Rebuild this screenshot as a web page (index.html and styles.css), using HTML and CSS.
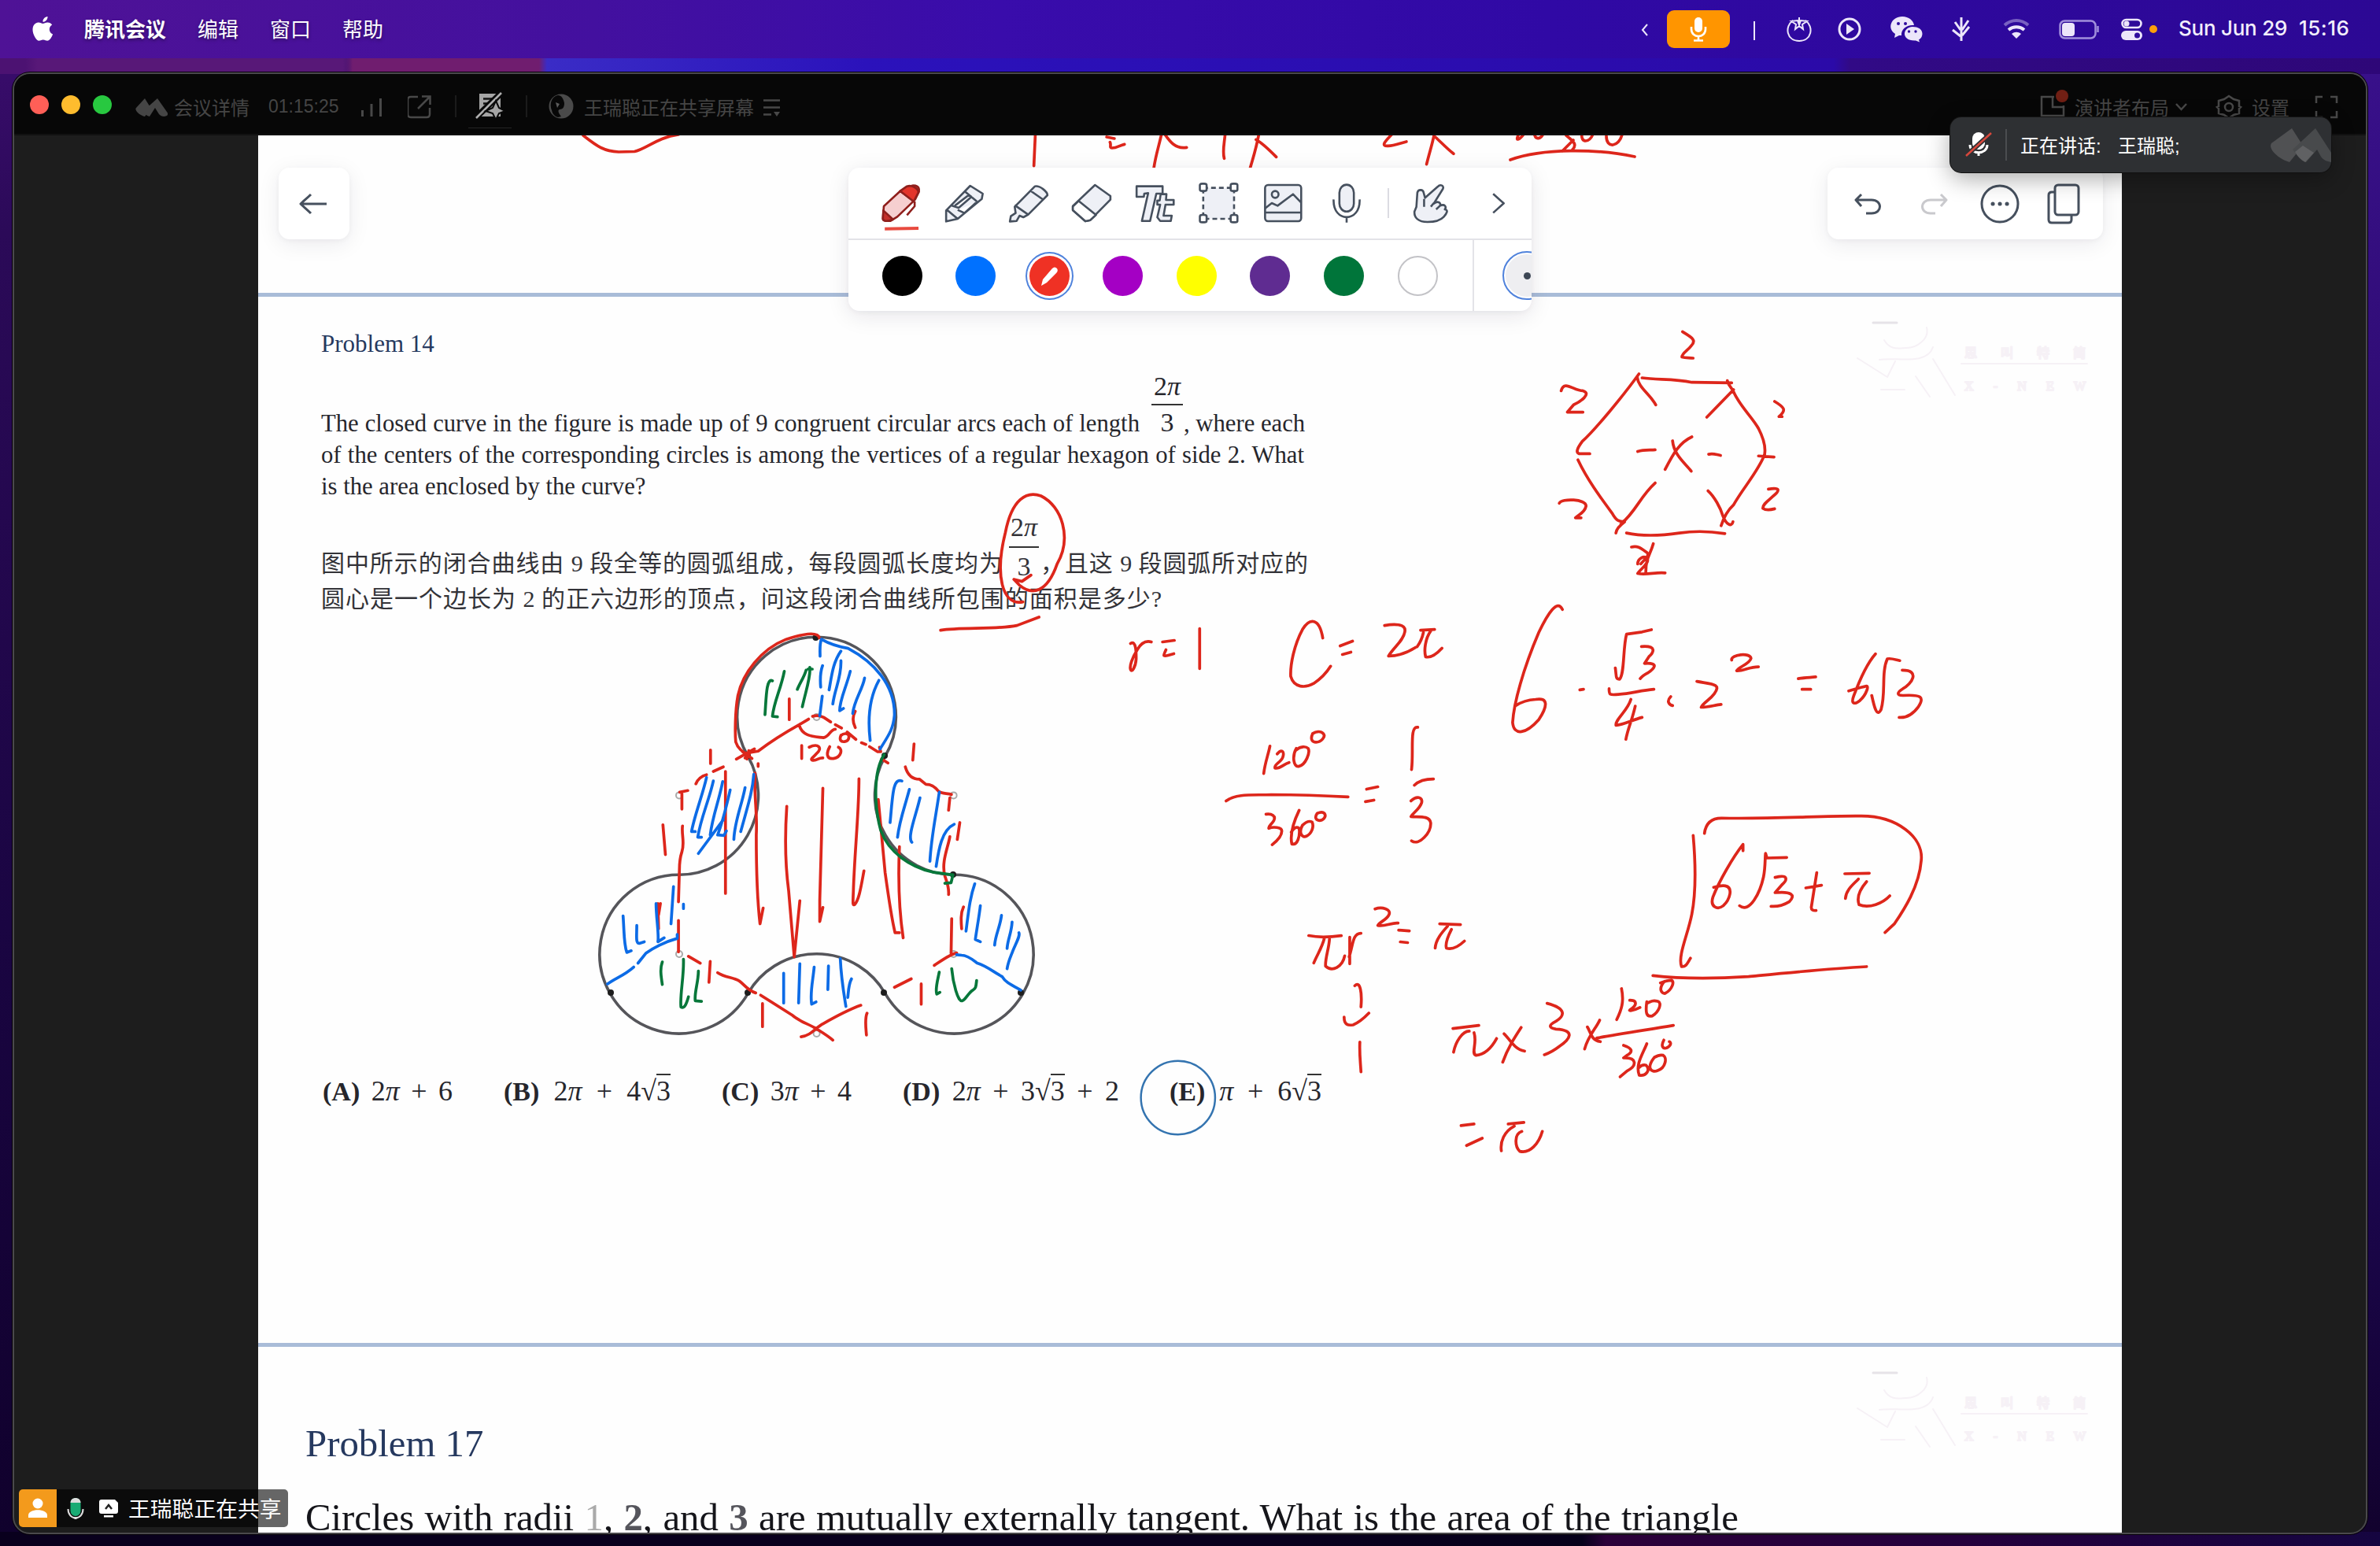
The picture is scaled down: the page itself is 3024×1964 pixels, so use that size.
FILE: index.html
```html
<!DOCTYPE html>
<html lang="zh-CN">
<head>
<meta charset="utf-8">
<title>腾讯会议</title>
<link rel="stylesheet" href="styles.css">
</head>
<body>
<header class="menubar">
  <nav class="menus">
    <svg class="apple" width="28" height="34" viewBox="40 18 28 34"><path d="M60.500 19c.3 3.500-2.500 6.800-6 6.800-.4-3.400 2.700-6.600 6-6.800zM54.500 28c1.500 0 3.300-1.500 6-1.500 2.200 0 4.400 1.200 5.700 3-5 3-4.200 10 .9 12-1.200 3.300-4 8.300-7 8.300-2 0-2.800-1.300-5.300-1.300s-3.400 1.300-5.300 1.300c-3.200 0-8-8-8-14 0-5.700 3.500-9.200 7.300-9.200 2.500 0 4.300 1.400 5.700 1.400z"/></svg>
    <b>腾讯会议</b><span>编辑</span><span>窗口</span><span>帮助</span>
  </nav>
  <div class="status">
    <svg width="44" height="74" viewBox="2074 0 44 74" class="line"><path d="M2093 31l-6 7 6 7"/></svg>
    <div class="mic-on"><svg width="26" height="34" viewBox="0 0 26 34"><rect x="8" y="2" width="10" height="19" rx="5" fill="#fff"/><path d="M4 14v3c0 12 18 12 18 0v-3M13 26v5M7 31.500h12" fill="none" stroke="#fff" stroke-width="2.600"/></svg></div>
    <svg width="60" height="74" viewBox="2198 0 60 74" class="line"><path d="M2229 27v24"/></svg>
    <svg width="62" height="74" viewBox="2258 0 62 74" class="line"><path d="M2278 26c-11 8-8 26 8 26s19-18 8-26M2286 30v-8M2276 27l8-1 2 6 2-6 8 1-6 4 1 6-5-4-5 4 1-6z"/></svg>
    <svg width="60" height="74" viewBox="2320 0 60 74" class="line thick"><circle cx="2350" cy="37" r="13"/><path class="solid" d="M2346 30l10 7-10 7z"/></svg>
    <svg width="80" height="74" viewBox="2380 0 80 74"><path class="lilac" d="M2417 21c8.500 0 14 5 15 11-9-1-17 5-16 13h-3l-6 3 1-5c-11-7-5-22 9-22z"/><path class="lilac" d="M2430 34c15 0 15 13 8 16.500l1 3-5-2c-19 1-17-17-4-17.500z"/><g fill="#2f0b9d"><circle cx="2412" cy="30" r="2"/><circle cx="2421" cy="30" r="2"/><circle cx="2425.500" cy="40" r="1.700"/><circle cx="2434" cy="40" r="1.700"/></g></svg>
    <svg width="62" height="74" viewBox="2460 0 62 74" class="line thick"><path d="M2492 22v30M2501 26l-8 12M2484 28l7 10M2502 34l-9 11M2481 38l10 8"/></svg>
    <svg width="78" height="74" viewBox="2522 0 78 74" class="line wifi"><path opacity=".4" d="M2547 32c9-8 21-8 30 0"/><path d="M2552 38c6-5 14-5 20 0"/><path class="solid" d="M2556 43c4-3 8-3 12 0l-6 6z" stroke="none"/></svg>
    <svg width="84" height="74" viewBox="2600 0 84 74"><rect x="2617.500" y="26.500" width="45" height="22" rx="6" fill="none" stroke="#a18fdc" stroke-width="2.500"/><path d="M2665.500 33v8" stroke="#a18fdc" stroke-width="2.500"/><rect class="lilac" x="2620" y="29" width="16" height="17" rx="4"/></svg>
    <svg width="80" height="74" viewBox="2684 0 80 74"><rect x="2696.500" y="25" width="24" height="10" rx="5" fill="none" stroke="#ece6fa" stroke-width="2.600"/><circle class="lilac" cx="2702" cy="30" r="3.500"/><rect class="lilac" x="2695" y="39" width="27" height="12" rx="6"/><circle cx="2715.500" cy="45" r="3.500" fill="#2f0b9d"/><circle cx="2736" cy="37" r="5" fill="#ff9f0a"/></svg>
    <span class="date">Sun Jun 29</span><span class="time">15:16</span>
  </div>
</header>

<main class="window">
  <div class="titlebar">
    <div class="lights"><i class="red"></i><i class="amber"></i><i class="green"></i></div>
    <div class="meeting">
      <svg width="42" height="40" viewBox="171 115 42 40"><path class="dim" d="M184 125l8 13-8 10c-6-1-14-8-11-11zM200 125l14 20c-4 5-9 3-12 0l-5-8-7 11c-4-1-7-4-8-7z"/></svg>
      <span class="t">会议详情</span><span class="clock">01:15:25</span>
      <svg width="78" height="40" viewBox="440 115 78 40"><path d="M460.500 140v8M472 132v16M483.500 125v23" stroke="#484848" stroke-width="3"/></svg>
      <svg width="60" height="40" viewBox="518 115 60 40" class="dimline"><path d="M531 123h-9q-4 0-4 4v18q0 4 4 4h20q4 0 4-4v-8M531 138l15-15M536 122.500h10.500V133"/></svg>
      <i class="sep"></i>
      <svg width="88" height="56" viewBox="579 108 88 56"><path d="M608 120h27v29h-27z" fill="#a5a5a5"/><path d="M613 126.500h12M613 132.500h8M613 138.500h5" stroke="#111" stroke-width="2.500"/><path d="M602 152l35-34" stroke="#080808" stroke-width="8"/><path d="M604 151l32-32" stroke="#b0b0b0" stroke-width="2.500"/><path d="M629 129l4 9 8 4-8 3-4 8-4-8-9-3 9-4z" fill="#a5a5a5" stroke="#080808" stroke-width="2"/><path d="M594 163.500h55" stroke="#242424"/></svg>
      <i class="sep"></i>
      <svg width="72" height="40" viewBox="669 115 72 40"><circle cx="712" cy="135" r="15.500" fill="#4a4a4a"/><path d="M708 121c-9 2-11 12-8 19 1 5 4 8 8 9l4-1c-3-4-5-8-2-9 5 0 6-4 6-8-1-6-4-10-8-10z" fill="#070707"/><path d="M705 130l5 2-3 5z" fill="#5c5c5c"/></svg>
      <span class="t">王瑞聪正在共享屏幕</span>
      <svg width="34" height="40" viewBox="958 115 34 40" class="dimline"><path d="M970 127.500h21M970 136.500h21M970 145.500h10"/><path d="M983 142h8l-4 6z" fill="#484848" stroke="none"/></svg>
    </div>
    <div class="tools">
      <svg width="56" height="56" viewBox="2580 108 56 56" class="dimline"><path d="M2610 124h-16v24h28v-13M2608 125v12h14"/><circle cx="2620" cy="123" r="8" fill="#701f14" stroke="none"/></svg>
      <span class="t">演讲者布局</span>
      <svg width="105" height="40" viewBox="2756 115 105 40" class="dimline"><path d="M2765 132l6.500 7 6.500-7"/><path d="M2832 122l6 4 7 2v7l2 1-2 2v6l-7 2-6 4-6-4-7-2v-6l-2-2 2-1v-7l7-2z"/><circle cx="2832" cy="136" r="5"/></svg>
      <span class="t">设置</span>
      <svg width="62" height="40" viewBox="2909 115 62 40" class="dimline"><path d="M2943 131v-8h8M2961 123h8v8M2969 141v8h-8M2951 149h-8v-8"/></svg>
    </div>
  </div>

  <div class="stage">
    <article class="board">
      <section class="page-above"></section>
      <section class="page14">
        <h2>Problem 14</h2>
        <div class="en">
          <div class="row"><p class="fit e1">The closed curve in the figure is made up of 9 congruent circular arcs each of length</p><span class="frac"><span>2<i>π</i></span><span>3</span></span><p class="fit e2">, where each</p></div>
          <p class="fit full">of the centers of the corresponding circles is among the vertices of a regular hexagon of side 2. What</p>
          <p class="e3">is the area enclosed by the curve?</p>
        </div>
        <div class="zh">
          <div class="row"><p class="fit z1">图中所示的闭合曲线由 9 段全等的圆弧组成，每段圆弧长度均为</p><span class="frac zf"><span>2<i>π</i></span><span>3</span></span><p class="fit z2">，且这 9 段圆弧所对应的</p></div>
          <p class="fit z3">圆心是一个边长为 2 的正六边形的顶点，问这段闭合曲线所包围的面积是多少?</p>
        </div>
        <svg class="figure" width="600" height="584" viewBox="740 783 600 584">
          <path class="curve" d="M950.400 961.800A100.800 100.800 0 1 1 1124.600 961.800A100.800 100.800 0 0 0 1211.600 1112.300A100.800 100.800 0 1 1 1124.600 1262.800A100.800 100.800 0 0 0 950.400 1262.800A100.800 100.800 0 1 1 863.200 1112.300A100.800 100.800 0 0 0 950.400 961.800Z"/>
          <g class="dots"><circle cx="1036.500" cy="811" r="4"/><circle cx="950" cy="961" r="4"/><circle cx="1124" cy="961" r="4"/><circle cx="1211" cy="1112" r="4"/><circle cx="776" cy="1262" r="4"/><circle cx="950" cy="1262" r="4"/><circle cx="1123" cy="1262" r="4"/><circle cx="1297" cy="1262" r="4"/></g>
          <g class="centres"><circle cx="1037.600" cy="912" r="4"/><circle cx="1211.600" cy="1011.400" r="4"/><circle cx="1211.600" cy="1213" r="4"/><circle cx="1037.600" cy="1314" r="4"/><circle cx="863" cy="1213" r="4"/><circle cx="863" cy="1011.400" r="4"/></g>
        </svg>
        <div class="choices">
          <p class="fit a"><b>(A)</b> 2<i>π</i> + 6</p>
          <p class="fit b"><b>(B)</b> 2<i>π</i> + 4<span class="rad">√<u>3</u></span></p>
          <p class="fit c"><b>(C)</b> 3<i>π</i> + 4</p>
          <p class="fit d"><b>(D)</b> 2<i>π</i> + 3<span class="rad">√<u>3</u></span> + 2</p>
          <p class="fit e"><b>(E)</b> <i>π</i> + 6<span class="rad">√<u>3</u></span></p>
        </div>
      </section>
      <section class="page17">
        <h2>Problem 17</h2>
        <p class="fit">Circles with radii <span class="grey">1</span>, <span class="bold">2</span>, and <span class="bold">3</span> are mutually externally tangent. What is the area of the triangle</p>
      </section>

      <svg class="ink" width="2368" height="1776" viewBox="328 172 2368 1776">
        <defs>
          <g id="watermark"><path d="M2394 432c8 14 20 10 28 10 14 0 30-12 26-26M2388 457c20-4 60 8 68-16M2360 455l38 24 10-20M2390 495h30M2434 478l18 26M2456 456l28 46M2492 462h160"/><path class="cap" d="M2380 410h30"/><text x="2496" y="454" textLength="154">思叫特简</text><text class="latin" x="2496" y="496" textLength="154">X-NEW</text></g>
        </defs>
        <g class="mark"><use href="#watermark"/><use href="#watermark" y="1334"/></g>
        <!-- previous page strokes -->
        <path d="M741 172C760 187 768 192 786 193L806 192.500C820 190 836 174 862 171"/>
        <g transform="translate(1040 150) scale(.6122 .3333)">
          <path d="M450 60L447 182M598 72l16 6M605 92c3 10-2 22 4 22 10 0 16-10 26-14M712 60c-6 50-12 80-16 130M718 60c10 26 22 60 46 52M844 60c-2 40-6 66-2 94M914 60c-6 60-12 90-18 130M908 82c14 14 28 40 42 66M1190 62c-10 20-26 46-8 44 14-1 24-10 38-16M1278 60c-4 40-10 70-16 116M1280 72c12 20 24 44 38 64"/>
        </g>
        <path d="M1919 203C1960 188 2030 189 2077 199M1929 172c-4 8 2 6 8-3M1950 172c2 6 9 4 11-3M1985 192l14-14M1990 172c10 8 14 12 8 18M2010 170c-2 12 10 12 14 0M2041 173c0 16 16 14 20-2"/>
        <!-- ring round the fraction -->
        <g transform="translate(380 400) scale(.6378 .3333)">
          <path d="M1442 1094C1400 1110 1386 990 1407 830C1420 700 1450 670 1478 690C1520 730 1540 850 1510 950C1490 1060 1460 1070 1435 1030L1424 1008L1440 1016L1458 992M1278 1202C1320 1190 1390 1200 1430 1184L1474 1152"/>
        </g>
        <!-- strokes over the figure -->
        <g transform="translate(730 780) scale(.3954 .3571)">
          <path d="M787 85C780 60 730 72 680 90C600 125 540 210 525 290C515 350 516 430 518 455C525 480 540 490 556 500M520 516l58-36M540 490l30 24M548 512l24-26M560 486l-6 30M556 494L590 488C640 446 680 420 722 394L752 374M722 394C730 440 780 436 800 440C820 436 820 412 838 410M765 364c16-6 26-2 36 4l22 16M838 394l20 12M876 420l28 26M922 458l14 6M948 472l26 18h10l-4-16M690 302v74M902 346c-10 20-8 40 0 58M730 468v46M754 474c30-16 44 4 24 22-10 14-22 20-14 24 14 4 20-10 34-8M820 472c-12 24-10 46 12 42 26-4 30-34 16-40M856 432c-6 16 0 24 12 22 16-2 18-26 6-28-10-2-14 2-18 6M987 516l20 14M590 532v10M437 484v48M446 560l32-16M390 604c6-16 14-26 34-32M338 634l26-6M345 640v54M347 754c-4 30 8 60-2 92-6 20-8 40-8 64l-3 114M334 1090v112M284 750l8 106M485 560v434M580 566c-4 80 8 140 4 220 0 120 4 240 12 316l10-56M682 684c-6 100-6 200 6 300 6 80 12 160 18 236l18-200M798 620c-2 120-6 240-10 400v74l10-50M914 586c0 120-14 260-18 400-2 50-2 50 4 48 14-16 20-60 30-120M976 660l22 260c10 80 20 160 32 214h14M1044 828c-4 100-2 220 12 324M1091 462l-4 58M1063 544c6 24 18 44 46 44l20 18c20 0 30 10 40 24 14 12 28 6 42 12M1206 654l-4 44M1238 742l-8 60M1206 792c-6 40-28 90-16 140 6 20 14 40 12 66M1212 1084l-2 122M1250 1042c-10 24-8 50-6 78M1228 1206c-20 4-50 28-72 44M1082 1298l-54 30M1114 1316v72M366 1218l38 24M436 1236l-4 74M460 1276c24 18 50 16 70 30 14 10 24 32 52 42M598 1356l100 70c24 24 50 30 80 50 20 14 38 26 52 40M920 1392c-50 20-90 46-128 70-20 14-34 38-64 42M604 1386v82M940 1420c-8 20-4 50-2 78M268 1030l2 90M276 1030l-6 40"/>
          <g class="blue"><path d="M793 90c-6 20-4 40-4 60M797 184c-8 24-8 50-6 76M796 292l-8 70M793 90c16 10 40 24 86 32C960 170 1030 250 1028 360c-4 50-18 70-46 120M856 132c-26 40-30 90-38 138M856 166c2 60-20 100-26 154M886 204c-14 60-34 100-34 140l12-8M932 228c-6 40-34 80-38 126M978 236c-30 60-36 140-28 214M424 582c-12 60-40 140-48 192h12M446 594c-14 70-40 130-50 200h12M476 596c-12 70-32 120-40 190M500 626c-12 60-20 100-40 160l20 2 8-16M548 618c-10 60-34 120-36 184M576 570c-4 60-16 100-42 204M398 852l80-120M1052 594c-30-14-30 60-38 148M1076 624c-14 60-32 110-38 170M1110 654c-12 60-42 140-26 158M1172 634c-10 80-26 160-30 246M1220 748c-40 20-50 90-58 150M318 970l-8 132M350 1032v16M156 1074c4 60 2 100 12 130l14-6M200 1108c0 40-4 64 8 64l16-6M262 1030c0 50 10 110 6 136l20-14M330 1140v14c-40 12-80 36-100 52l-26 36M190 1256c-30 30-60 40-84 60M1286 960c-16 50-20 100-28 168M1304 1038c-4 40-14 100-16 120l16 8M1372 1072c-4 40-20 70-22 106M1406 1096c-2 40-14 60-16 94M1428 1134c4 10-6 30-18 60-10 30-16 40-20 68M1228 1212l16 2c20 0 40 20 50 28 30 10 50 30 80 48 10 20 30 30 60 48M672 1278v106M724 1244l-4 140M770 1256c-4 50-14 90-8 132l14-8M816 1252l-2 84M854 1226c2 50 12 130 18 170M890 1298c-10 20-10 50-12 66"/></g>
          <g class="green"><path d="M636 238c-20-12-20 60-24 120M674 204c-10 60-34 110-38 160l16 2M744 200c-6 24-20 46-28 68M756 190c4 30-12 80-24 140M750 196h14M995 500C960 560 962 680 984 770C1010 850 1080 900 1150 918l64 10M1190 958l20-2 6-28M282 1238c-8 24-4 50 0 80M350 1228c2 60-12 130-8 170 12 10 20-20 24-36M398 1270c0 40-14 80-10 106l20 2M1172 1274c-4 24-14 60-8 78l10-6M1212 1262c4 50 20 120 34 114 10-2 20-30 34-38 10-6 10-14 12-34"/></g>
        </g>
        <!-- radius and arc fraction -->
        <g transform="translate(1380 720) scale(.3571 .4974)">
          <path d="M158 196c22-10 20 30 20 40-2 20-16 36-20 26-4-8 6-30 24-50 14-18 30-24 50-20M272 192l42-4M284 212c-10 16-12 18 8 14l20-4M404 158v102M842 182C830 130 796 130 770 160C740 200 726 250 728 280C740 310 780 310 810 298C840 284 856 270 870 254M904 202l44-12M912 224l30-6M1062 150c30-4 78-6 72 16-6 24-40 40-58 62 40 0 70-10 96-22M1190 162l50-2M1200 168c-4 14-10 24-22 36M1226 164c-20 20-24 50-18 66 20 4 40-8 58-22M654 458c-6 22-18 44-22 70M680 478c16-14 26-6 20 8-6 14-32 18-28 28 16 4 30-10 50-14M748 464c-16 20-10 48 8 46 26-4 42-36 34-46-8-6-28-6-42 4M806 426c-10 16 0 22 12 22 18 0 36-14 26-22-10-8-28-4-38 0M498 598c40-20 100-14 160-16 100 0 180 2 274 6M998 568l40-6M994 600l30-4M640 632c20-2 36 4 28 16-8 10-20 14-18 20 14-4 48-4 46 8 0 14-20 26-34 34M758 622c-16 24-34 60-26 86 20 4 30-20 26-40-12-6-22 2-28 10M770 660c-16 20 0 34 14 28 18-6 28-24 20-36-10-4-22 0-34 8M822 630c-10 10-4 18 8 18 14 0 26-10 18-18-8-6-20-2-26 0M1180 410c-30-4-14 60-22 108M1168 558c14-10 40-16 68-16M1156 598c20-14 42-10 38 4-6 16-30 26-38 36 24 2 66-4 70 16 2 24-40 60-68 46M792 942c40 6 76 4 116 0M848 948c-8 24-24 40-38 64M866 950c-2 26-16 50-14 70 24 16 60 2 68-26M938 946v68M978 936c-30 0-28 30-42 60M1028 874c24-6 58 0 50 14-8 14-32 18-40 28 24 4 50-8 72-6M1112 928l38 2M1118 958l26 2M1258 912l74 2M1286 918c-20 16-42 34-44 56M1300 926c-10 14-24 34-18 48 24 6 46-6 64-18M956 1070c20-14 26 20 22 54M918 1150c0 20 14 22 32 20 20-6 40-18 56-30M974 1214c-2 30 2 50 4 76"/>
          <ellipse class="ring" cx="327" cy="1356" rx="132" ry="94"/>
        </g>
        <!-- hexagon and its area -->
        <g transform="translate(1880 400) scale(.3954 .3571)">
          <path d="M652 60c30 20 46 30 28 50-10 16-30 26-30 40 12 4 24 2 36 4M512 210C460 290 370 410 330 450C310 480 310 490 320 494h34M506 220c4 40 40 60 60 100M522 224c50 8 100 2 160 16l128 2M796 234c4 20 14 24 20 40 20 50 60 90 80 130 14 30 24 60 20 90M816 266l-86 98M262 270c10-40 40 0 70 0 30 10-10 40-30 50l-20 26h50M948 308c30 20 40 30 14 54h10M508 486c20-8 40-4 56-6M682 434c-40 20-60 60-86 116M620 448c4 50 40 80 60 108M736 496c14-4 20 0 38 4M896 502l50 4M916 496c-20 60-70 120-100 180-20 20-30 40-40 74M734 626c20 20 40 60 48 90 10 30 28 40 32 20M316 516c30 70 70 130 110 190 12 24 20 30 40 30-16 16-26 24-28 40M564 598c-50 50-60 100-110 146M472 776c60 14 120 8 170 0 50-8 100-6 146 2M256 670c8-18 86-16 86 10-4 24-24 30-34 42h18M928 620c40-8 36 6 16 24-20 20-34 30-34 44 10 8 24 6 38 2M488 826c20-6 30 4 50 20 10 10-10 26-20 40M558 814c-10 40-24 50-24 100M508 886c0-20 20-30 30-20 10 16-20 36-30 54 30 6 60-6 88-2M266 1048C250 1010 220 1060 190 1130C140 1260 110 1380 106 1450C110 1500 150 1490 190 1440C220 1390 220 1360 180 1368C150 1370 130 1380 116 1390M322 1334l12-2M436 1256c4 30 0 40 14 40 16-20 10-110 22-160l50-8 30-8M520 1180c50-4 40 20 24 36l-14 24c50-4 30 20 10 34-16 10-20 14-24 20M416 1330c0 20 0 24 30 20 40-2 70-14 114-18M486 1368c-10 40-50 70-48 92 26-2 50-18 84-28M500 1392c-10 50-24 80-30 118M614 1358c-14 16-6 28 6 32M698 1304c50 10 80 8 56 44-16 24-34 30-42 48 24 0 44-8 64-10M810 1228c-4-20 60-28 62-6-4 20-40 30-46 44 20 2 40-14 70-14M1024 1294c20-4 40-4 56-6M1036 1332h28M1272 1206c-24 30-50 90-70 150-10 30 4 30 20 16 20-20 34-60 16-50-20 4-30 10-52 16M1260 1354c8 40 16 80 30 50 16-60 0-130 20-180 10-4 24 2 40 6M1358 1264c60 0 30 50 2 66-20 14-20 24 0 24 60-4 70 6 50 40-20 30-40 40-62 38"/>
        </g>
        <!-- final result -->
        <g transform="translate(1820 960) scale(.4337 .3333)">
          <path d="M764 304c8 120 8 220-4 300-12 80-42 160-30 200 14 2 18-16 26-32M797 296c4-40 20-58 50-58 160 4 300-10 410-8C1360 230 1440 310 1432 400C1426 500 1380 590 1354 640l-28 34M910 362v-24c-30 50-70 140-88 200-10 40 14 50 30 34 20-24 30-70 6-76-16-2-24 2-34 6M900 572c30 30 60-50 70-110 6-40 4-70 6-90l4 18 58-2M1004 464c40-14 36 10 20 28l-20 30c50-6 60 10 42 34-20 16-36 20-54 18M1126 446l-16 132q0 14 14 12M1094 504l46-10M1208 450l72-2M1248 470c-14 20-36 40-38 74M1272 480c-20 30-30 60-22 88 30 16 70-6 90-34M646 838c80 12 180 12 280 4 110-14 230-30 346-38M680 860c-20 30-8 48 2 46 20-14 28-44 18-50-10 0-20 4-32 10M554 888c8 50 0 80-14 118M578 932c24 0 20 20 4 34-14 10 8 6 26-6M628 938c-4 40-2 60 16 54 20-16 30-50 16-56-14-4-20 0-28 6M60 1040l76-12M108 1050c-20 0-40 40-46 80M122 1056c10 40-10 80 6 86 30-4 50-40 60-64M210 1060c14 16 30 60 60 66M260 1036c-20 40-40 80-54 132M336 944c60 20 50 50 26 68-24 16-20 26 0 30 60 4 40 40 10 66-20 20-30 26-44 32M454 1034c10 20 10 50 38 56M490 1008c-10 30-34 60-44 110M482 1076c60-14 140-30 224-48M560 1104c24 10 30 24 10 38l-10 10c40-2 40 30 10 50l-20 22M628 1098c-12 40-34 80-22 120 20 4 34-20 20-38-10-4-16 2-22 10M650 1150c-24 40-10 60 10 50 24-10 28-50 16-58-10-4-18 2-26 8M678 1084c-10 24-2 34 8 30 14-8 14-22 8-24M84 1410l38-6M100 1486l46-28M222 1404l46-6M240 1412c-30 20-42 60-38 94M262 1432c-24 10-20 60-6 76 30 10 56-30 66-76"/>
        </g>
      </svg>

      <div class="card back"><svg width="90" height="91" viewBox="354 213 90 91"><path d="M415 259h-33M395 247c-5 5-9 8-13 12 4 4 8 7 13 12"/></svg></div>
      <div class="card palette">
        <div class="pens">
          <svg preserveAspectRatio="none" viewBox="104 212 132 227"><g stroke="#8f1f1c"><path fill="#e3342b" d="M186 268c8-16 24-12 22 14l-8 30z"/><path fill="#f6cfd0" d="M133 386l2-48 34-58 28 38-34 60-14 16q-16 2-16-8z"/><path fill="#e3342b" d="M169 280l14-18c10-6 22 6 24 22l-10 36z"/><path fill="#c4302b" d="M134 354l20 34q-20 14-21-4z"/><path fill="none" d="M199 320v18l-16 34"/></g><path d="M137 424l70-2" stroke="#e84a3f" stroke-width="4"/></svg>
          <svg preserveAspectRatio="none" viewBox="236 212 132 227"><path d="M314 260l26 30-2 20-50 76-24 10v-42zM266 352l22 34M302 280l26 40M276 336l14 8 28-44M288 352l14 12 24-40M282 336l30-42"/></svg>
          <svg preserveAspectRatio="none" viewBox="368 212 132 227"><path d="M448 262c10-4 26 20 26 34l-40 74-10 10-8-6-6 20-14 2 2-20 10-12-2-24zM438 278l28 36M406 334l28 36"/></svg>
          <svg preserveAspectRatio="none" viewBox="500 212 132 227"><path d="M574 257l32 42v14l-42 78-10 4-26-42v-16z"/><path fill="#fff" d="M540 318l-12 21v14l26 42 10-4 12-20z"/></svg>
          <svg preserveAspectRatio="none" viewBox="632 212 132 227"><path d="M660 262h54v28h-13l-13 104h-17l13-106-8 2-1 12h-15zM710 292h12l-1 22h16v18h-17l-4 42h17l-2 20h-22l-6-14 6-48h-6v-16h5z"/></svg>
          <svg preserveAspectRatio="none" viewBox="764 212 132 227"><path stroke="none" d="M800 268h62v118h-62z"/><path fill="none" stroke-dasharray="6 4" d="M798 268h64v118h-64z"/><g fill="#fff"><rect x="791" y="252" width="14" height="28" rx="5"/><rect x="855" y="252" width="14" height="28" rx="5"/><rect x="791" y="371" width="14" height="28" rx="5"/><rect x="855" y="371" width="14" height="28" rx="5"/></g></svg>
          <svg preserveAspectRatio="none" viewBox="896 212 132 227"><rect x="926" y="257" width="75" height="138" rx="6" ry="12"/><path fill="none" d="M926 362h75M926 346l14-20 12 10 32-44 17 32"/><ellipse cx="947" cy="293" rx="7" ry="13"/></svg>
          <svg preserveAspectRatio="none" viewBox="1028 212 132 227"><rect x="1080" y="256" width="30" height="102" rx="15" ry="30"/><path fill="none" d="M1068 312c-2 90 56 90 54 0M1095 380v20"/></svg>
          <i class="psep"></i>
          <svg preserveAspectRatio="none" viewBox="1204 212 132 227"><path d="M1241 340l2-54c2-14 12-12 13 0l3 20 26-42c6-12 14-4 11 8l-19 56c8-12 16-4 13 8 10-8 14 4 10 14 8 2 4 16-2 28-8 16-20 20-34 20-20 0-28-18-27-40zM1257 310v30M1277 326l-6 14M1290 336l-8 14"/></svg>
          <svg preserveAspectRatio="none" viewBox="1336 212 132 227"><path fill="none" d="M1400 291l22 36-22 36"/></svg>
        </div>
        <div class="swatches">
          <div class="inks"><i class="black"></i><i class="sky"></i><i class="picked"><svg width="26" height="34" viewBox="0 0 26 34"><path d="M3 30l2-8L17 8q3-3 6 0 2 3-1 6L10 26z" fill="#fff"/></svg></i><i class="magenta"></i><i class="yellow"></i><i class="purple"></i><i class="leaf"></i><i class="white"></i></div>
          <div class="nib"><i></i></div>
        </div>
      </div>
      <div class="card history"><svg width="350" height="91" viewBox="2322 213 350 91"><path d="M2358 254h20c14 0 14 17 0 17h-7M2365 247l-7 7 7 8"/><path stroke="#c9c9cd" d="M2473 254h-20c-14 0-14 17 0 17h6M2466 247l7 7-7 8"/><circle cx="2541" cy="259" r="23"/><path stroke-width="5" stroke-linecap="round" d="M2532 259h.1M2541 259h.1M2550 259h.1"/><path d="M2610 244h-3q-4 0-4 4v31q0 4 4 4h21q4 0 4-4v-6"/><rect x="2611" y="235" width="30" height="38" rx="4" fill="#fff"/></svg></div>
    </article>
  </div>

  <aside class="sharing">
    <span class="who"><svg width="48" height="48" viewBox="0 0 48 48"><circle cx="24" cy="18" r="6.500" fill="#fff"/><path d="M12 36v-3c0-9 24-9 24 0v3z" fill="#fff"/></svg></span>
    <svg width="48" height="48" viewBox="72 1892 48 48"><rect x="89.500" y="1903" width="13" height="23" rx="6.500" fill="#19ab74"/><path d="M89.500 1909c0-8 13-8 13 0z" fill="#ddd"/><path d="M86.500 1917c0 15 19 15 19 0M96 1928v1" fill="none" stroke="#ddd" stroke-width="2"/><path d="M96 1927v3" stroke="#ddd" stroke-width="3"/></svg>
    <svg width="43" height="48" viewBox="120 1892 43 48"><path d="M129 1905h17l4 4v11q0 3-3 3h-18q-3 0-3-3v-12q0-3 3-3zM132 1925h12v2.500h-12z" fill="#fff"/><path d="M134 1917l4-5 4 5" fill="none" stroke="#222" stroke-width="2.500"/></svg>
    <span>王瑞聪正在共享</span>
  </aside>
</main>

<div class="toast">
  <svg width="70" height="70" viewBox="2478 149 70 70"><rect x="2506" y="168" width="16" height="22" rx="8" fill="#fff"/><path d="M2503 184c0 13 22 13 22 0M2514 193v5" fill="none" stroke="#fff" stroke-width="3"/><path d="M2498 198l32-29" stroke="#2e3033" stroke-width="6"/><path d="M2498 198l32-29" stroke="#d8473c" stroke-width="2.500"/></svg>
  <i></i><span class="label">正在讲话:</span><span>王瑞聪;</span>
  <svg class="logo" width="80" height="46" viewBox="2882 161 80 46"><path d="M2912 163l14 22-17 21c-12-3-28-16-23-24z" fill="#505153"/><path d="M2942 163l20 31v12c-6-1-10-3-13-7l-5-9-14 16c-8-3-12-10-17-16z" fill="#484a4c"/><path d="M2926 185l14 9-11 12c-6-3-10-8-13-13z" fill="#606163"/></svg>
</div>
</body>
</html>
```
FILE: styles.css
```css
* { box-sizing: border-box; }
body {
  margin: 0; width: 3024px; height: 1964px; overflow: hidden; position: relative;
  font-family: "Liberation Sans", "Noto Sans CJK SC", sans-serif;
  background:
    linear-gradient(90deg, #4c1272 0 32px, #581878 48px 436px, transparent 448px) 0 74px / 3024px 20px no-repeat,
    linear-gradient(90deg, transparent 436px, #701d6f 448px 685px, #3a2cc6 695px, #2b12bb 1100px, #2b0aa8 2330px, #310a86 2350px, #2e0778) 0 74px / 3024px 20px no-repeat,
    linear-gradient(90deg, #09001d 0 1650px, #06001a 2010px, #2b0039 2040px, #24003c 2500px, #150540) 0 1946px / 3024px 18px no-repeat,
    linear-gradient(180deg, #38108a, #2c0b6a 35%, #1d0754 70%, #12022e) 3000px 94px / 24px 1852px no-repeat,
    linear-gradient(180deg, #3d0d72, #2b0a58 15%, #1a0542 60%, #10012c);
}
p, h2 { margin: 0; font-weight: 400; }
svg { display: block; flex: none; }
i { font-style: normal; }

.menubar { height: 74px; display: flex; justify-content: space-between; align-items: center; color: #fff; font-size: 26px; background: linear-gradient(90deg, #4f1296, #43109f 25%, #390cab 42%, #3009a5 65%, #2c0894); }
.menus { display: flex; align-items: center; gap: 40px; padding-left: 40px; height: 74px; text-shadow: 0 2px 4px #0006; }
.menus b, .menus span { padding-bottom: 3px; }
.menus b { margin-left: -1px; }
.apple { fill: #fff; }
.status { display: flex; align-items: center; }
.line { fill: none; stroke: #ece6fa; stroke-width: 2; }
.thick { stroke-width: 3; }
.wifi { stroke-width: 4; }
.solid, .lilac { fill: #ece6fa; }
.solid { stroke: none; }
.mic-on { width: 80px; height: 48px; border-radius: 9px; background: #ff9500; display: grid; place-items: center; }
.date, .time { font: 500 26px Inter, sans-serif; white-space: nowrap; color: #f2eefc; padding-bottom: 3px; }
.date { width: 153px; margin-left: 4px; letter-spacing: -.25px; }
.time { width: 103px; letter-spacing: .5px; }

.window { width: 2992px; height: 1857px; margin: 18px 0 0 16px; border-radius: 22px; overflow: hidden; background: #1d1d1d; border: 2px solid #4a494c; position: relative; box-shadow: 0 0 0 1px #060109; }
.titlebar { height: 78px; background: #070707; display: flex; align-items: center; border-bottom: 2px solid #111; font-size: 24px; color: #454545; }
.lights { display: flex; gap: 16px; margin: 0 29px 0 20px; padding-top: 1px; }
.lights i { width: 24px; height: 24px; border-radius: 50%; }
.red { background: #ff5f57; } .amber { background: #febc2e; } .green { background: #28c840; }
.meeting, .tools { display: flex; align-items: center; padding-top: 6px; }
.tools { margin-left: auto; padding-right: 35px; }
.t { white-space: nowrap; }
.meeting .t:first-of-type { margin-left: 8px; }
.clock { font-size: 23px; width: 99px; margin-left: 24px; }
.dim { fill: #454545; }
.dimline { fill: none; stroke: #484848; stroke-width: 2.500; }
.sep { width: 2px; height: 28px; background: #1b1b1b; }

.stage { padding-left: 310px; height: 1775px; }
.board { width: 2368px; height: 1775px; background: #fefefe; position: relative; overflow: hidden; color: #26262c; font-family: "Liberation Serif", "Noto Sans CJK SC", serif; }
.board h2 { color: #26395f; }
.page-above { height: 200px; }
.page14 { height: 1339px; border: solid #a9bcd8; border-width: 5px 0; padding: 40px 0 0 80px; }
.page14 h2 { font-size: 31px; line-height: 40px; }
.en { margin-top: 61px; font-size: 30.700px; line-height: 40px; }
.row { display: flex; align-items: center; height: 40px; }
.fit { text-align: justify; text-align-last: justify; white-space: nowrap; }
.e1 { width: 1040px; } .e2 { width: 153px; margin-left: 1px; } .full { width: 1249px; }
.frac { width: 40px; margin: -49px 0 0 15px; text-align: center; flex: none; }
.frac span { display: block; line-height: 44px; font-size: 34px; }
.frac span + span { border-top: 2px solid #333; }
.frac i, .choices i { font-style: italic; }
.zh { margin-top: 55px; font-size: 30px; line-height: 45px; font-weight: 300; color: #333338; }
.zh .row { height: 45px; }
.z1 { width: 866px; } .z2 { width: 340px; margin-left: 2px; } .z3 { width: 1068px; }
.zf { margin: -42px 0 0 8px; width: 38px; }
.zf span { line-height: 48px; font-weight: 400; }
.figure { margin: -1px 0 0 332px; }
.curve { fill: none; stroke: #55555a; stroke-width: 3.600; }
.dots { fill: #1d1d1d; }
.centres { fill: #fff; stroke: #aaa; stroke-width: 2; }
.choices { display: flex; font-size: 36px; line-height: 40px; padding-left: 2px; }
.a { width: 165px; margin-right: 65px; } .b { width: 212px; margin-right: 65px; } .c { width: 165px; margin-right: 65px; } .d { width: 275px; margin-right: 64px; } .e { width: 193px; }
.choices b { font-size: 34px; }
.rad u { text-decoration: none; border-top: 2px solid #333; }
.page17 { padding: 76px 0 0 60px; font-size: 48.800px; line-height: 94px; }
.page17 h2 { font-size: 48.800px; }
.page17 .fit { width: 1821px; color: #15151a; }
.grey { color: #aaa; } .bold { color: #55555c; font-weight: 700; }

.ink { position: absolute; left: 0; top: 0; fill: none; stroke: #dd261b; stroke-width: 3.700; stroke-linecap: round; stroke-linejoin: round; }
.ink path, .ink ellipse { vector-effect: non-scaling-stroke; }
.blue { stroke: #0c6be6; }
.green { background: #28c840; }
.ink .green { stroke: #07773a; }
.ring { stroke: #3474b0; stroke-width: 2.500; }
.mark { stroke: #f6f1f6; stroke-width: 2; }
.mark text { stroke: none; fill: #f5eff6; font: 38px "Noto Sans CJK SC", sans-serif; }
.mark .latin { font: 26px "Liberation Sans", sans-serif; }
.cap { stroke: #e6e3e8; stroke-width: 3; }

.card { position: absolute; top: 41px; background: #fff; border-radius: 14px; box-shadow: 0 6px 28px #1a103014, 0 2px 6px #1a10300a; }
.card svg { fill: none; stroke: #46505e; stroke-width: 3; stroke-linejoin: round; }
.back { left: 26px; width: 90px; height: 91px; }
.history { left: 1994px; width: 350px; height: 91px; }
.palette { left: 750px; width: 868px; height: 182px; overflow: hidden; box-shadow: 0 6px 28px #1a10301a, 0 2px 6px #1a10300a; }
.pens { height: 92px; display: flex; align-items: center; padding-left: 26px; border-bottom: 2px solid #e3e3e8; }
.card .pens svg { width: 80.800px; height: 75.700px; stroke-width: 2.600; fill: #eef0f6; }
.pens svg * { vector-effect: non-scaling-stroke; }
.psep { width: 2px; height: 38px; background: #dcdce2; margin: 0 12px 0 13px; }
.swatches { display: flex; height: 90px; }
.inks { width: 795px; flex: none; display: flex; gap: 42.600px; align-items: center; padding-left: 42.500px; border-right: 2px solid #e3e3e8; }
.inks i { width: 51px; height: 51px; border-radius: 50%; flex: none; }
.black { background: #000; } .sky { background: #0071ff; } .magenta { background: #a400c4; } .yellow { background: #ff0; } .purple { background: #5f2c91; } .leaf { background: #00753a; } .white { background: #fff; border: 2px solid #c3c3c7; }
.inks .picked { background: #ef3124; box-shadow: 0 0 0 3px #fff, 0 0 0 5px #4f82dc; display: grid; place-items: center; }
.inks .picked svg { stroke: none; }
.nib { width: 62px; height: 62px; flex: none; margin: 14px 0 0 36px; border: 2.500px solid #4f82dc; border-radius: 50%; background: #eeeef1; box-shadow: inset 0 0 0 2px #fff; display: grid; place-items: center; }
.nib i { width: 9px; height: 9px; border-radius: 50%; background: #3c4654; }

.sharing { position: absolute; left: 6px; bottom: 7px; width: 342px; height: 48px; display: flex; align-items: center; background: #0009; border-radius: 5px; overflow: hidden; color: #fff; font-size: 27.800px; white-space: nowrap; }
.sharing > span:last-child { padding-bottom: 2px; }
.who { background: #f39a1c; }

.toast { position: absolute; left: 2478px; top: 149px; width: 484px; height: 70px; border-radius: 14px; background: #2e3033; color: #fff; display: flex; align-items: center; font-size: 24px; white-space: nowrap; box-shadow: 0 8px 30px #0005, 0 0 0 1px #151515; }
.toast i { width: 2px; height: 40px; background: #4b4d50; margin-right: 17px; }
.toast span { padding-bottom: 2px; }
.label { width: 124px; }
.logo { margin-left: auto; }
```
